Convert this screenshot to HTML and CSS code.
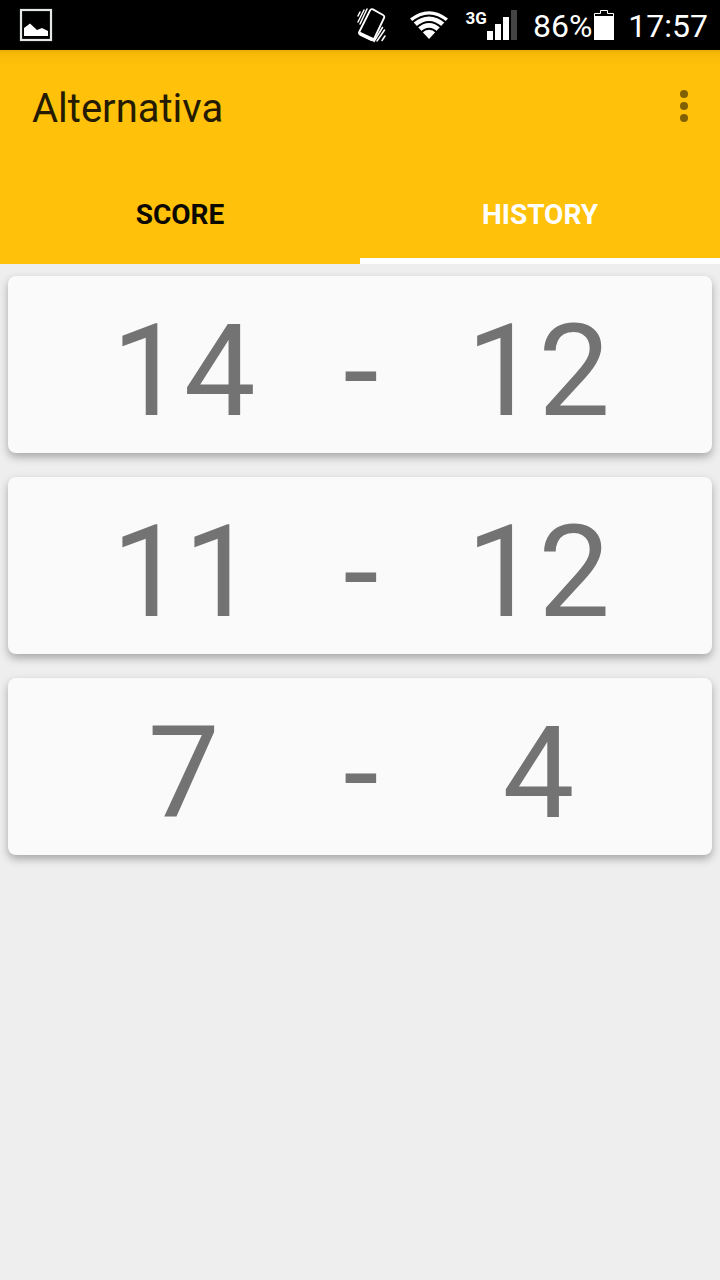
FILE: index.html
```html
<!DOCTYPE html>
<html lang="en">
<head>
<meta charset="utf-8">
<meta name="viewport" content="width=device-width, initial-scale=1">
<title>Alternativa</title>
<link rel="stylesheet" href="styles.css">
</head>
<body>
<div class="status-bar">
  <svg class="status-picture" width="34" height="34" viewBox="0 0 34 34" aria-hidden="true">
    <rect x="2" y="2" width="30" height="30" fill="none" stroke="#e4e8e8" stroke-width="2.2"/>
    <path d="M5 28V20L11 15.500L18 22L23 20L29 23V28Z" fill="#fff"/>
  </svg>
  <div class="status-icons">
    <svg class="status-vibrate" width="30" height="36" viewBox="0 0 30 36" aria-hidden="true">
      <g fill="none" stroke="#fff" stroke-linecap="round">
        <path d="M14 3.500Q15 1.500 17 2.400L27 8Q29 9.200 28 11L18 32Q17 34 15 33L4.500 28Q2.300 26.800 3.200 25Z" stroke-width="1.8"/>
        <path d="M2 9L4 5M2 15L8 3M4 17L11 2M28.500 23L21 34M29 29L26 33.500M26.500 20.500L18 34.500" stroke-width="1.5"/>
      </g>
      <path d="M3.500 24.500L18.500 31.500L17.500 33.500L15 33.500L4 28Z" fill="#fff"/>
    </svg>
    <svg class="status-wifi" width="38" height="28" viewBox="0 0 38 28" aria-hidden="true">
      <path d="M0 7.500Q19 -7 38 7.500L19 28Z" fill="#fff"/>
      <path d="M2 11.500Q19 -2.500 36 11.500M6.500 16.500Q19 5.500 31.500 16.500M11 21.500Q19 14 27 21.500" fill="none" stroke="#000" stroke-width="2"/>
    </svg>
    <div class="signal">
      <span class="network">3G</span>
      <svg width="30" height="30" viewBox="0 0 30 30" aria-hidden="true">
        <path d="M0 21h6v9H0zM8 14h6v16H8zM16 7h6v23h-6z" fill="#fff"/>
        <path d="M24 0h6v30h-6z" fill="#444"/>
      </svg>
    </div>
    <span class="battery-level">86%</span>
    <svg class="battery" width="20" height="30" viewBox="0 0 20 30" aria-hidden="true">
      <path d="M.5 6V3.500H6.500V.5H13.500V3.500H19.500V6" fill="none" stroke="#fff"/>
      <path d="M0 6h20v24H0z" fill="#fff"/>
    </svg>
    <time class="clock">17:57</time>
  </div>
</div>
<header class="app-header">
  <div class="toolbar">
    <h1 class="title">Alternativa</h1>
    <button class="menu-button" type="button" aria-label="More options">
      <svg width="8" height="32" viewBox="0 0 8 32" aria-hidden="true">
        <circle cx="4" cy="4" r="4"/><circle cx="4" cy="16" r="4"/><circle cx="4" cy="28" r="4"/>
      </svg>
    </button>
  </div>
  <nav class="tabs" role="tablist">
    <button class="tab" type="button" role="tab" aria-selected="false">SCORE</button>
    <button class="tab tab-active" type="button" role="tab" aria-selected="true">HISTORY</button>
  </nav>
</header>
<main class="history">
  <article class="card"><span class="points">14</span><span class="dash">-</span><span class="points">12</span></article>
  <article class="card"><span class="points">11</span><span class="dash">-</span><span class="points">12</span></article>
  <article class="card"><span class="points">7</span><span class="dash">-</span><span class="points">4</span></article>
</main>
</body>
</html>
```
FILE: styles.css
```css
* {
  box-sizing: border-box;
}

body {
  margin: 0;
  min-height: 100vh;
  background: #eee;
  font-family: Roboto, "Liberation Sans", sans-serif;
}

button {
  border: 0;
  padding: 0;
  background: none;
  font: inherit;
}

svg {
  display: block;
  flex: none;
}

.status-bar {
  display: flex;
  align-items: center;
  justify-content: space-between;
  height: 50px;
  padding: 0 12px 0 19px;
  background: #000;
  color: #fff;
  font-size: 32px;
  line-height: 48px;
}

.status-icons {
  display: flex;
  align-items: center;
}

.status-vibrate {
  margin-right: 24px;
}

.status-wifi {
  margin-right: 18px;
}

.signal {
  display: flex;
  margin-right: 16px;
}

.network {
  font-size: 17px;
  font-weight: 700;
  line-height: 16px;
}

.battery-level,
.clock {
  padding-top: 2px;
}

.battery-level {
  margin-right: 2px;
}

.battery {
  margin-right: 14px;
}

.app-header {
  background: linear-gradient(#e9ae07, #f8ba08 4px, #ffc109 16px);
}

.toolbar {
  display: flex;
  align-items: center;
  justify-content: space-between;
  height: 112px;
  padding: 0 24px 0 32px;
}

.title {
  margin: 6px 0 0;
  color: #241b01;
  font-size: 40px;
  font-weight: 400;
  line-height: 48px;
}

.menu-button {
  display: flex;
  align-items: center;
  justify-content: center;
  width: 24px;
  height: 48px;
  fill: #7f6004;
}

.tabs {
  display: grid;
  grid-template-columns: 1fr 1fr;
}

.tab {
  height: 102px;
  padding-top: 10px;
  border-bottom: 6px solid transparent;
  color: #0b0800;
  font-size: 28px;
  font-weight: 700;
  line-height: 32px;
}

.tab-active {
  border-bottom-color: #fff;
  color: #fff;
}

.history {
  display: grid;
  gap: 24px;
  padding: 12px 8px;
}

.card {
  display: flex;
  justify-content: center;
  padding: 20px 14px 7px 16px;
  border-radius: 8px;
  background: #fafafa;
  box-shadow: 0 4px 9px rgba(0, 0, 0, 0.3);
  color: #737373;
  font-size: 128px;
  line-height: 150px;
}

.points {
  flex: 1;
  text-align: center;
}
```
